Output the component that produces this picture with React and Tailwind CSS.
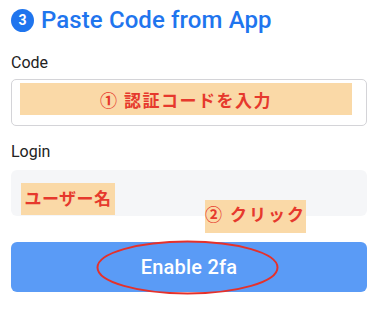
export default function App() {
  const jp = { fontFamily: '"Noto Sans CJK JP", "Noto Sans", sans-serif' };
  return (
    <div className="w-[378px] h-[312px] bg-white px-[11px] pt-[7px] overflow-hidden" style={{ fontFamily: 'Roboto, "Liberation Sans", sans-serif' }}>
      <div className="flex items-center gap-[7px] h-[26px]">
        <div className="w-[23px] h-[23px] rounded-full bg-[#1f75ee] flex items-center justify-center text-white text-[14px] font-bold leading-none">3</div>
        <div className="text-[#1f75ee] text-[24px] font-medium leading-[26px] tracking-[0.1px]">Paste Code from App</div>
      </div>

      <div className="mt-[18px] text-[16px] leading-[24px] text-[#222]">Code</div>
      <div className="relative mt-[4px] h-[47px] rounded-[5px] border border-[#d4d4d8] bg-white">
        <div className="absolute left-[8px] top-[3px] w-[332px] h-[32px] bg-[#fad9a7] flex items-center justify-center text-[#e6392d] text-[17px] font-semibold tracking-[1.5px] leading-none" style={jp}>
          ① 認証コードを入力
        </div>
      </div>

      <div className="mt-[14px] text-[16px] leading-[24px] text-[#222]">Login</div>
      <div className="relative mt-[6px] h-[46px] rounded-[6px] bg-[#f5f6f8]">
        <div className="absolute left-[10px] top-[13px] w-[94px] h-[32px] bg-[#fad9a7] flex items-start justify-center pt-[5px] text-[#e6392d] text-[17px] font-bold tracking-[0.5px] leading-[20px]" style={jp}>
          ユーザー名
        </div>
        <div className="absolute left-[194px] top-[30px] w-[101px] h-[33px] bg-[#fad9a7] flex items-start justify-center pt-[4px] text-[#e6392d] text-[17px] font-bold tracking-[2px] leading-[20px]" style={jp}>
          ② クリック
        </div>
      </div>

      <div className="relative mt-[26px] h-[50px] rounded-[6px] bg-[#5a9bf6] flex items-center justify-center">
        <span className="text-white text-[20px] font-medium tracking-[0.2px]">Enable 2fa</span>
        <svg className="absolute left-[85px] top-[-2px]" width="183" height="55" viewBox="0 0 183 55">
          <ellipse cx="91.5" cy="27.5" rx="90" ry="26" fill="none" stroke="#e5312b" strokeWidth="2" />
        </svg>
      </div>
    </div>
  );
}
